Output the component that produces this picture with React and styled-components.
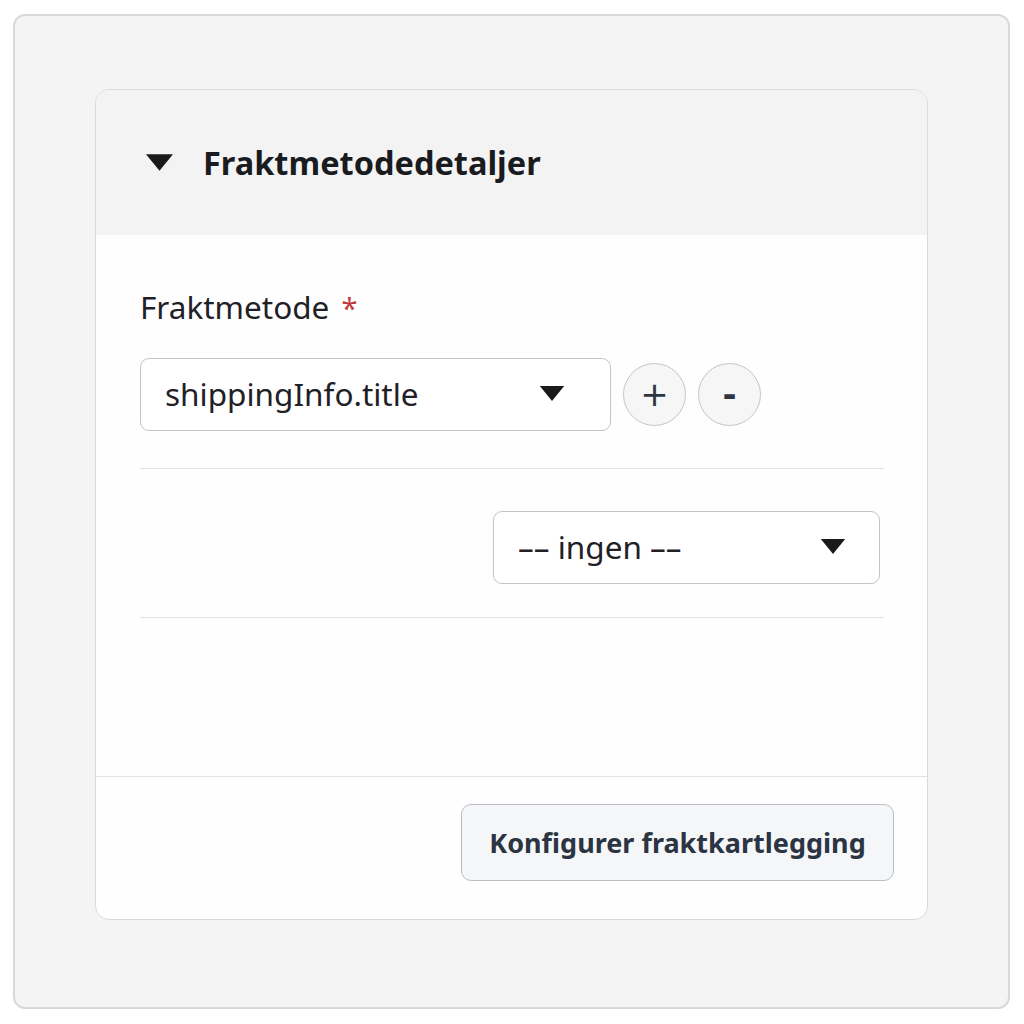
import React from "react";
import styled, { createGlobalStyle } from "styled-components";

const Global = createGlobalStyle`
  html, body { margin: 0; padding: 0; background: #ffffff; }
  body { font-family: "Noto Sans", "Open Sans", sans-serif; }
  * { box-sizing: border-box; }
`;

const Frame = styled.div`
  margin: 14px 14px 0 13px;
  height: 995px;
  border: 2px solid #d9d9d9;
  border-radius: 12px;
  background: #f4f4f4;
  padding: 73px 81px 0 80px;
`;

const Card = styled.section`
  width: 833px;
  height: 831px;
  border: 1.5px solid #dadada;
  border-radius: 14px;
  background: #fefefe;
  overflow: hidden;
  display: flex;
  flex-direction: column;
`;

const Header = styled.div`
  height: 145px;
  background: #f3f3f4;
  display: flex;
  align-items: center;
  padding-left: 50px;
  gap: 30px;
`;

const Caret = styled.svg`
  width: ${(p) => p.$w}px;
  height: ${(p) => p.$h}px;
  flex: none;
  fill: #1a1a1a;
`;

const Title = styled.h2`
  margin: 0;
  font-size: 32.5px;
  font-weight: 700;
  color: #1a1b1f;
`;

const Body = styled.div`
  flex: 1;
  padding: 51px 43px 0 44px;
  display: flex;
  flex-direction: column;
`;

const Label = styled.label`
  font-size: 31.5px;
  color: #1f2126;
  line-height: 42px;
`;

const Req = styled.span`
  color: #bd3b3d;
  margin-left: 12px;
  font-size: 29px;
`;

const Row = styled.div`
  display: flex;
  align-items: center;
  gap: 12px;
  margin-top: ${(p) => p.$mt || 0}px;
  justify-content: ${(p) => (p.$end ? "flex-end" : "flex-start")};
  padding-right: ${(p) => p.$pr || 0}px;
`;

const Select = styled.div`
  width: ${(p) => p.$w}px;
  height: 73px;
  border: 1.5px solid #c3c4c8;
  border-radius: 9px;
  background: #ffffff;
  display: flex;
  align-items: center;
  justify-content: space-between;
  padding: 0 ${(p) => p.$pr}px 2px 24px;
  font-size: 31.5px;
  color: #1f2126;
`;

const RoundBtn = styled.button`
  width: 63px;
  height: 63px;
  border-radius: 50%;
  border: 1.5px solid #c4c5c9;
  background: #f6f6f7;
  font-family: "DejaVu Sans", sans-serif;
  font-size: 34px;
  font-weight: ${(p) => (p.$bold ? 700 : 400)};
  color: #2f3540;
  display: flex;
  align-items: center;
  justify-content: center;
  padding: 0 0 2px;
  line-height: 1;
`;

const Divider = styled.hr`
  border: none;
  border-top: 1.5px solid #e3e3e6;
  margin: ${(p) => p.$m || "0"};
  width: 100%;
`;

const Footer = styled.div`
  height: 143px;
  border-top: 1.5px solid #e1e2e6;
  display: flex;
  justify-content: flex-end;
  padding: 27px 33px 0 0;
`;

const ActionBtn = styled.button`
  width: 433px;
  height: 77px;
  border: 1.5px solid #b9bdc5;
  border-radius: 10px;
  background: #f5f6f8;
  font-family: inherit;
  font-size: 27px;
  font-weight: 700;
  color: #2b3443;
`;

const Tri = ({ w, h }) => (
  <Caret $w={w} $h={h} viewBox="0 0 26 16">
    <polygon points="0,0 26,0 13,16" />
  </Caret>
);

export default function App() {
  return (
    <>
      <Global />
      <Frame>
        <Card>
          <Header>
            <Tri w={27} h={19} />
            <Title>Fraktmetodedetaljer</Title>
          </Header>
          <Body>
            <Label>
              Fraktmetode<Req>*</Req>
            </Label>
            <Row $mt={29}>
              <Select $w={471} $pr={45}>
                <span>shippingInfo.title</span>
                <Tri w={26} h={15} />
              </Select>
              <RoundBtn>+</RoundBtn>
              <RoundBtn $bold>-</RoundBtn>
            </Row>
            <Divider $m="37px 0 0" />
            <Row $mt={42} $end $pr={4}>
              <Select $w={387} $pr={33}>
                <span>–– ingen ––</span>
                <Tri w={26} h={15} />
              </Select>
            </Row>
            <Divider $m="33px 0 0" />
          </Body>
          <Footer>
            <ActionBtn>Konfigurer fraktkartlegging</ActionBtn>
          </Footer>
        </Card>
      </Frame>
    </>
  );
}
